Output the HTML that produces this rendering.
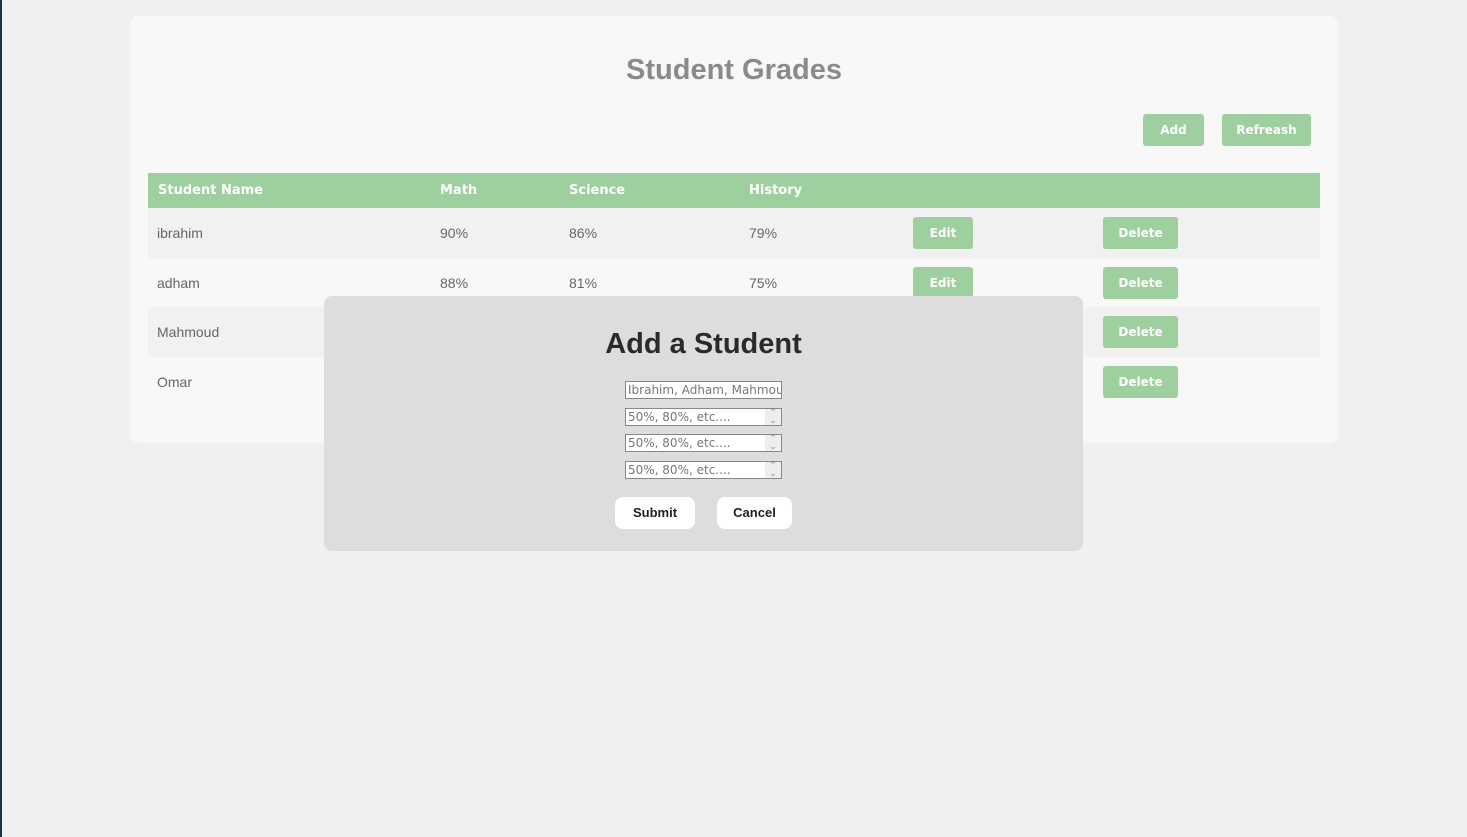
<!DOCTYPE html>
<html><head><style>
*{box-sizing:border-box}
body{margin:0;width:1467px;height:837px;background:#f0f0f0;font-family:"Liberation Sans",sans-serif;position:relative;overflow:hidden}
.edge{position:absolute;left:0;top:0;width:2px;height:837px;background:#1f2f4f}
.card{position:absolute;left:130px;top:16px;width:1208px;height:427px;background:#f8f8f8;border-radius:8px}
h1{position:absolute;left:0;right:0;top:38px;margin:0;text-align:center;font-size:29px;color:#8a8a8a;font-weight:bold}
.btn{position:absolute;background:#9ecf9f;color:#fff;font-weight:bold;border-radius:3px;text-align:center;line-height:32px;height:32px;font-family:"DejaVu Sans","Liberation Sans",sans-serif;font-size:12px}
.row{position:absolute;left:148px;width:1172px;height:50px;font-size:14px;color:#666}
.row span{position:absolute;top:0;line-height:50px}
.hdr{top:173px;height:35px;background:#9ecf9f;color:#fff;font-weight:bold;font-family:"DejaVu Sans","Liberation Sans",sans-serif;font-size:13px}
.hdr span{line-height:35px}
.modal{position:absolute;left:324px;top:296px;width:759px;height:255px;background:#dddddd;border-radius:8px}
.modal h2{position:absolute;left:0;right:0;top:32px;margin:0;text-align:center;font-size:29px;color:#2a2a2a}
.inp{position:absolute;left:301px;width:157px;height:18px;background:#fff;border:1px solid #888;color:#777;line-height:16px;padding-left:2px;font-family:"DejaVu Sans",sans-serif;font-size:12px;white-space:nowrap;overflow:hidden}
.inp i{position:absolute;right:0;top:0;width:16px;height:16px;background:#eee;font-style:normal;font-size:9px;text-align:center;line-height:8px;color:#888}
.mb{position:absolute;top:201px;height:32px;background:#fff;border-radius:8px;font-weight:bold;font-size:13px;color:#222;text-align:center;line-height:32px}
</style></head><body>
<div class="edge"></div>
<div class="card"><h1>Student Grades</h1></div>
<div class="btn" style="left:1143px;top:114px;width:61px">Add</div>
<div class="btn" style="left:1222px;top:114px;width:89px">Refreash</div>
<div class="row hdr"><span style="left:10px">Student Name</span><span style="left:292px">Math</span><span style="left:421px">Science</span><span style="left:601px">History</span></div>
<div class="row" style="top:208px;background:#f1f1f1"><span style="left:9px">ibrahim</span><span style="left:292px">90%</span><span style="left:421px">86%</span><span style="left:601px">79%</span></div>
<div class="row" style="top:258px"><span style="left:9px">adham</span><span style="left:292px">88%</span><span style="left:421px">81%</span><span style="left:601px">75%</span></div>
<div class="row" style="top:307px;background:#f1f1f1"><span style="left:9px">Mahmoud</span></div>
<div class="row" style="top:357px"><span style="left:9px">Omar</span></div>
<div class="btn" style="left:913px;top:217px;width:60px">Edit</div>
<div class="btn" style="left:913px;top:267px;width:60px">Edit</div>
<div class="btn" style="left:1103px;top:217px;width:75px">Delete</div>
<div class="btn" style="left:1103px;top:267px;width:75px">Delete</div>
<div class="btn" style="left:1103px;top:316px;width:75px">Delete</div>
<div class="btn" style="left:1103px;top:366px;width:75px">Delete</div>
<div class="modal">
<h2>Add a Student</h2>
<div class="inp" style="top:85px">Ibrahim, Adham, Mahmoud,</div>
<div class="inp" style="top:112px">50%, 80%, etc....<i>⌃<br>⌄</i></div>
<div class="inp" style="top:138px">50%, 80%, etc....<i>⌃<br>⌄</i></div>
<div class="inp" style="top:165px">50%, 80%, etc....<i>⌃<br>⌄</i></div>
<div class="mb" style="left:291px;width:80px">Submit</div>
<div class="mb" style="left:393px;width:75px">Cancel</div>
</div>
</body></html>
